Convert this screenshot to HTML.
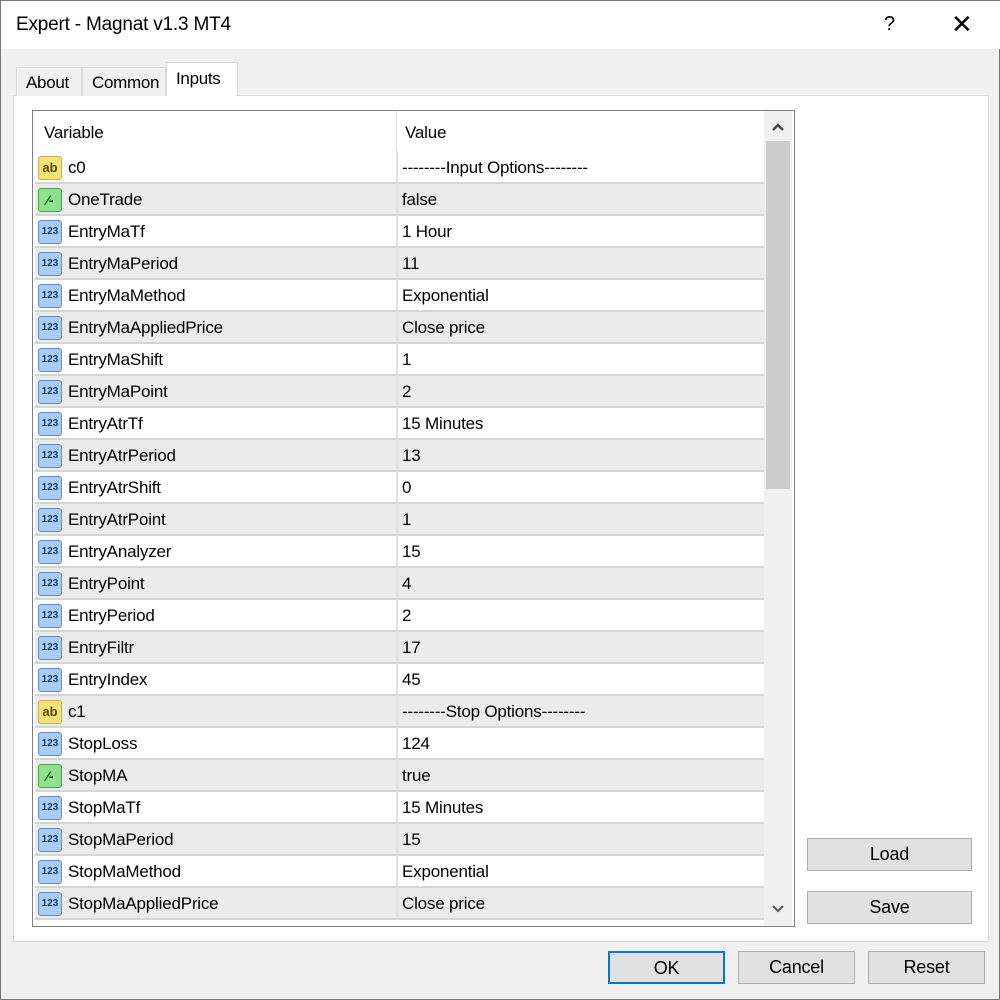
<!DOCTYPE html>
<html><head><meta charset="utf-8"><style>
*{box-sizing:border-box;margin:0;padding:0}
body{width:1000px;height:1000px;background:#f0f0f0;font-family:"Liberation Sans",sans-serif;color:#000;position:relative;overflow:hidden;border:1px solid #777}
.title{position:absolute;left:0;top:0;width:1000px;height:48px;background:#fff}
.title .t{position:absolute;left:15px;top:13px;font-size:19px;letter-spacing:-0.2px}
.title .q{position:absolute;left:883px;top:12px;font-size:20px}
.title .x{position:absolute;left:950px;top:8px;font-size:26px}
.tab{position:absolute;top:66px;height:29px;border:1px solid #d9d9d9;border-bottom:none;background:#f0f0f0;font-size:17px;padding:5px 0 0 9px;letter-spacing:-0.3px}
.panel{position:absolute;left:12px;top:94px;width:976px;height:847px;background:#fff;border:1px solid #d9d9d9}
.list{position:absolute;left:31px;top:109px;width:763px;height:817px;border:1px solid #828282;background:#fff;overflow:hidden;letter-spacing:-0.2px}
.hdr{position:absolute;top:0;height:41px;font-size:17px;padding-top:12px}
.row{position:absolute;left:2px;width:729px;height:32px;border-bottom:2px solid #d4d4d4;font-size:17px}
.row.g{background:#ebebeb}
.row .n{position:absolute;left:33px;top:6px}
.row .v{position:absolute;left:367px;top:6px}
.row .c{position:absolute;left:361px;top:-1px;width:2px;height:33px;background:#e0e0e0}
.ic{position:absolute;left:3px;top:4px;width:24px;height:24px;border-radius:3px;font-size:11px;font-weight:bold;text-align:center;line-height:22px;letter-spacing:0}
.ab{background:#f3e27c;border:1px solid #c9b23d;color:#5a4a00;font-size:13px}
.num{background:#a9cdf0;border:1px solid #5a8fc8;color:#123d6e;font-size:10px}
.bo{background:#8fe08f;border:1px solid #3fa83f;color:#0a500a;font-size:14px}
.sb{position:absolute;left:731px;top:0;width:28px;height:815px;background:#f0f0f0}
.thumb{position:absolute;left:2px;top:30px;width:24px;height:348px;background:#cdcdcd}
.btn{position:absolute;height:33px;background:#e1e1e1;border:1px solid #adadad;font-size:18px;text-align:center;line-height:30px;letter-spacing:-0.2px}
</style></head><body>
<div class="title"><span class="t">Expert - Magnat v1.3 MT4</span><span class="q">?</span><span class="x">✕</span></div>
<div class="panel"></div>
<div class="tab" style="left:15px;width:66px">About</div>
<div class="tab" style="left:81px;width:84px">Common</div>
<div class="tab" style="left:165px;top:61px;height:34px;width:72px;background:#fff;padding-top:6px">Inputs</div>
<div class="list">
<div class="hdr" style="left:11px">Variable</div>
<div class="hdr" style="left:372px">Value</div>
<div style="position:absolute;left:363px;top:0;width:1px;height:41px;background:#e5e5e5"></div>
<div id="rows"></div>
<div class="sb"><div class="thumb"></div>
<svg style="position:absolute;left:7px;top:11px" width="14" height="10"><path d="M2 8L7 3L12 8" stroke="#444" stroke-width="2.4" fill="none"/></svg>
<svg style="position:absolute;left:7px;top:793px" width="14" height="10"><path d="M2 2L7 7L12 2" stroke="#555" stroke-width="2" fill="none"/></svg>
</div>
</div>
<div class="btn" style="left:806px;top:837px;width:165px">Load</div>
<div class="btn" style="left:806px;top:890px;width:165px">Save</div>
<div class="btn" style="left:607px;top:950px;width:117px;border:2px solid #0078d7">OK</div>
<div class="btn" style="left:737px;top:950px;width:117px">Cancel</div>
<div class="btn" style="left:867px;top:950px;width:117px">Reset</div>
<script>
var d=[["a","c0","--------Input Options--------"],["b","OneTrade","false"],["n","EntryMaTf","1 Hour"],["n","EntryMaPeriod","11"],["n","EntryMaMethod","Exponential"],["n","EntryMaAppliedPrice","Close price"],["n","EntryMaShift","1"],["n","EntryMaPoint","2"],["n","EntryAtrTf","15 Minutes"],["n","EntryAtrPeriod","13"],["n","EntryAtrShift","0"],["n","EntryAtrPoint","1"],["n","EntryAnalyzer","15"],["n","EntryPoint","4"],["n","EntryPeriod","2"],["n","EntryFiltr","17"],["n","EntryIndex","45"],["a","c1","--------Stop Options--------"],["n","StopLoss","124"],["b","StopMA","true"],["n","StopMaTf","15 Minutes"],["n","StopMaPeriod","15"],["n","StopMaMethod","Exponential"],["n","StopMaAppliedPrice","Close price"]];
var h="";d.forEach(function(r,i){var ic=r[0]=="a"?'<div class="ic ab">ab</div>':r[0]=="b"?'<div class="ic bo">⁄-</div>':'<div class="ic num">123</div>';
h+='<div class="row'+(i%2?' g':'')+'" style="top:'+(41+i*32)+'px">'+ic+'<span class="n">'+r[1]+'</span><div class="c"></div><span class="v">'+r[2]+'</span></div>';});
document.getElementById("rows").innerHTML=h;
</script>
</body></html>
